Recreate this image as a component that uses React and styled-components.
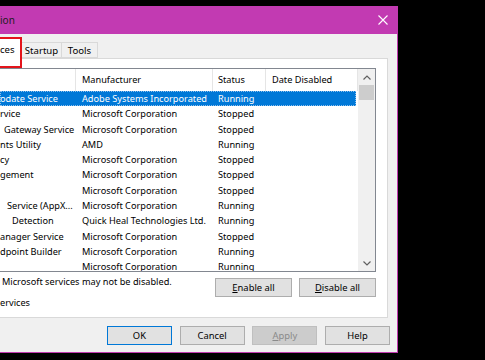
import styled, { createGlobalStyle } from "styled-components";

const GlobalStyle = createGlobalStyle`
  html, body {
    margin: 0;
    padding: 0;
    background: #000;
    overflow: hidden;
  }

  body {
    font-family: "Noto Sans", "Segoe UI", sans-serif;
    font-size: 9.2px;
    color: #000;
  }
`;

const Screen = styled.div`
  width: 485px;
  height: 360px;
  padding-top: 6px;
  box-sizing: border-box;
  background: #000;
`;

const Window = styled.div`
  width: 398px;
  height: 347px;
  box-sizing: border-box;
  display: flex;
  flex-direction: column;
  background: #f0f0f0;
  border-right: 1px solid #c13ab0;
  border-bottom: 1px solid #c13ab0;
`;

const TitleBar = styled.div`
  height: 28px;
  flex-shrink: 0;
  display: flex;
  align-items: center;
  justify-content: space-between;
  background: #c23ab2;
  font-size: 10px;
  color: #1e1e1e;
`;

const CloseButton = styled.div`
  width: 28px;
  height: 28px;
  display: flex;
  align-items: center;
  justify-content: center;
`;

const Body = styled.div`
  display: flex;
  flex-direction: column;
`;

const TabStrip = styled.div`
  height: 24px;
  display: flex;
  align-items: flex-end;
`;

const Tab = styled.div`
  position: relative;
  box-sizing: border-box;
  height: ${(p) => (p.$active ? "21px" : "16px")};
  width: ${(p) => p.$width}px;
  margin-bottom: ${(p) => (p.$active ? "-1px" : "0")};
  margin-left: ${(p) => (p.$first ? "0" : "-1px")};
  z-index: ${(p) => (p.$active ? 2 : 1)};
  display: flex;
  align-items: ${(p) => (p.$active ? "flex-start" : "center")};
  justify-content: ${(p) => (p.$active ? "flex-start" : "center")};
  padding-top: ${(p) => (p.$active ? "4px" : "0")};
  background: ${(p) => (p.$active ? "#fff" : "#f0f0f0")};
  border: 1px solid #d9d9d9;
  border-left: ${(p) => (p.$first ? "none" : "1px solid #d9d9d9")};
  border-bottom: ${(p) => (p.$active ? "none" : "1px solid #d9d9d9")};
  font-size: 9.6px;
`;

const Callout = styled.div`
  position: absolute;
  left: -10px;
  top: -2px;
  width: 32px;
  height: 31px;
  box-sizing: border-box;
  border: 2px solid #e3141b;
`;

const Panel = styled.div`
  position: relative;
  z-index: 1;
  margin-right: 9px;
  padding: 9px 11px 8px 0;
  background: #fff;
  border: 1px solid #d9d9d9;
  border-left: none;
  display: flex;
  flex-direction: column;
`;

const ListView = styled.div`
  height: 204px;
  box-sizing: border-box;
  display: flex;
  border: 1px solid #828790;
  border-left: none;
  background: #fff;
`;

const TableArea = styled.div`
  flex: 1;
  display: flex;
  flex-direction: column;
  overflow: hidden;
`;

const columns = "76px 137px 53px 1fr";

const HeaderRow = styled.div`
  height: 22px;
  flex-shrink: 0;
  display: grid;
  grid-template-columns: ${columns};
`;

const HeaderCell = styled.div`
  padding-left: ${(p) => p.$pad ?? 6}px;
  line-height: 22px;
  border-right: 1px solid #e5e5e5;
  white-space: nowrap;
  overflow: hidden;
`;

const Rows = styled.div`
  flex: 1;
  overflow: hidden;
`;

const Row = styled.div`
  height: 15.3px;
  display: grid;
  grid-template-columns: ${columns};
  margin-right: 2px;
  line-height: 15.3px;
  background: ${(p) => (p.$selected ? "#0078d7" : "transparent")};
  color: ${(p) => (p.$selected ? "#fff" : "#000")};
  outline: ${(p) => (p.$selected ? "1px dotted #8cc0ee" : "none")};
  outline-offset: -1px;
`;

const Cell = styled.div`
  padding-left: ${(p) => p.$pad ?? 6}px;
  white-space: nowrap;
  overflow: hidden;
`;

const ScrollBar = styled.div`
  width: 17px;
  flex-shrink: 0;
  display: flex;
  flex-direction: column;
  background: #f0f0f0;
`;

const ScrollArrow = styled.div`
  height: 16px;
  display: flex;
  align-items: center;
  justify-content: center;
`;

const Thumb = styled.div`
  height: 15px;
  margin: 0 1px;
  background: #cdcdcd;
`;

const Track = styled.div`
  flex: 1;
`;

const FooterRow = styled.div`
  margin-top: 4px;
  display: flex;
  justify-content: space-between;
  align-items: flex-start;
`;

const Note = styled.div`
  padding-left: ${(p) => p.$pad ?? 0}px;
  line-height: 12px;
  white-space: nowrap;
`;

const ButtonGroup = styled.div`
  display: flex;
  gap: ${(p) => p.$gap}px;
  margin-top: ${(p) => p.$top ?? 0}px;
  margin-right: ${(p) => p.$right ?? 0}px;
  justify-content: flex-end;
`;

const Button = styled.div`
  box-sizing: border-box;
  width: ${(p) => p.$width}px;
  height: ${(p) => p.$height}px;
  display: flex;
  align-items: center;
  justify-content: center;
  font-size: 9.4px;
  background: ${(p) => (p.$disabled ? "#cccccc" : "#e1e1e1")};
  border: 1px solid
    ${(p) => (p.$default ? "#0078d7" : p.$disabled ? "#bfbfbf" : "#adadad")};
  color: ${(p) => (p.$disabled ? "#8a8a8a" : "#000")};

  u {
    text-decoration-thickness: 1px;
    text-underline-offset: 1px;
  }
`;

const ChevronUp = () => (
  <svg width="8" height="5" viewBox="0 0 8 5">
    <path d="M0.5 4.5 L4 1 L7.5 4.5" fill="none" stroke="#606060" strokeWidth="1.2" />
  </svg>
);

const ChevronDown = () => (
  <svg width="8" height="5" viewBox="0 0 8 5">
    <path d="M0.5 0.5 L4 4 L7.5 0.5" fill="none" stroke="#606060" strokeWidth="1.2" />
  </svg>
);

const rows = [
  { name: "odate Service", maker: "Adobe Systems Incorporated", status: "Running", selected: true },
  { name: "rvice", maker: "Microsoft Corporation", status: "Stopped" },
  { name: "Gateway Service", pad: 4, maker: "Microsoft Corporation", status: "Stopped" },
  { name: "nts Utility", maker: "AMD", status: "Running" },
  { name: "cy", maker: "Microsoft Corporation", status: "Stopped" },
  { name: "gement", maker: "Microsoft Corporation", status: "Stopped" },
  { name: "", maker: "Microsoft Corporation", status: "Stopped" },
  { name: "Service (AppX...", pad: 7, maker: "Microsoft Corporation", status: "Running" },
  { name: "Detection", pad: 12, maker: "Quick Heal Technologies Ltd.", status: "Running" },
  { name: "anager Service", maker: "Microsoft Corporation", status: "Stopped" },
  { name: "dpoint Builder", maker: "Microsoft Corporation", status: "Running" },
  { name: "", maker: "Microsoft Corporation", status: "Running" },
];

export default function App() {
  return (
    <Screen>
      <GlobalStyle />
      <Window>
        <TitleBar>
          <span>ion</span>
          <CloseButton>
            <svg width="10" height="10" viewBox="0 0 10 10">
              <path d="M0.5 0.5 L9.5 9.5 M9.5 0.5 L0.5 9.5" stroke="#fff" strokeWidth="1.1" />
            </svg>
          </CloseButton>
        </TitleBar>

        <Body>
          <TabStrip>
            <Tab $active $first $width={22}>
              ces
              <Callout />
            </Tab>
            <Tab $width={41}>Startup</Tab>
            <Tab $width={37}>Tools</Tab>
          </TabStrip>

          <Panel>
            <ListView>
              <TableArea>
                <HeaderRow>
                  <HeaderCell $pad={0} />
                  <HeaderCell>Manufacturer</HeaderCell>
                  <HeaderCell $pad={5}>Status</HeaderCell>
                  <HeaderCell>Date Disabled</HeaderCell>
                </HeaderRow>
                <Rows>
                  {rows.map((r, i) => (
                    <Row key={i} $selected={r.selected}>
                      <Cell $pad={r.pad ?? 0}>{r.name}</Cell>
                      <Cell>{r.maker}</Cell>
                      <Cell $pad={5}>{r.status}</Cell>
                      <Cell />
                    </Row>
                  ))}
                </Rows>
              </TableArea>
              <ScrollBar>
                <ScrollArrow>
                  <ChevronUp />
                </ScrollArrow>
                <Thumb />
                <Track />
                <ScrollArrow>
                  <ChevronDown />
                </ScrollArrow>
              </ScrollBar>
            </ListView>

            <FooterRow>
              <Note $pad={2}>Microsoft services may not be disabled.</Note>
              <ButtonGroup $gap={7} $top={2}>
                <Button $width={77} $height={19}>
                  <span>
                    <u>E</u>nable all
                  </span>
                </Button>
                <Button $width={77} $height={19}>
                  <span>
                    <u>D</u>isable all
                  </span>
                </Button>
              </ButtonGroup>
            </FooterRow>
            <Note>ervices</Note>
          </Panel>

          <ButtonGroup $gap={7.7} $top={8} $right={7}>
            <Button $width={65} $height={19} $default>
              OK
            </Button>
            <Button $width={65} $height={19}>
              Cancel
            </Button>
            <Button $width={65} $height={19} $disabled>
              <span>
                <u>A</u>pply
              </span>
            </Button>
            <Button $width={65} $height={19}>
              Help
            </Button>
          </ButtonGroup>
        </Body>
      </Window>
    </Screen>
  );
}
